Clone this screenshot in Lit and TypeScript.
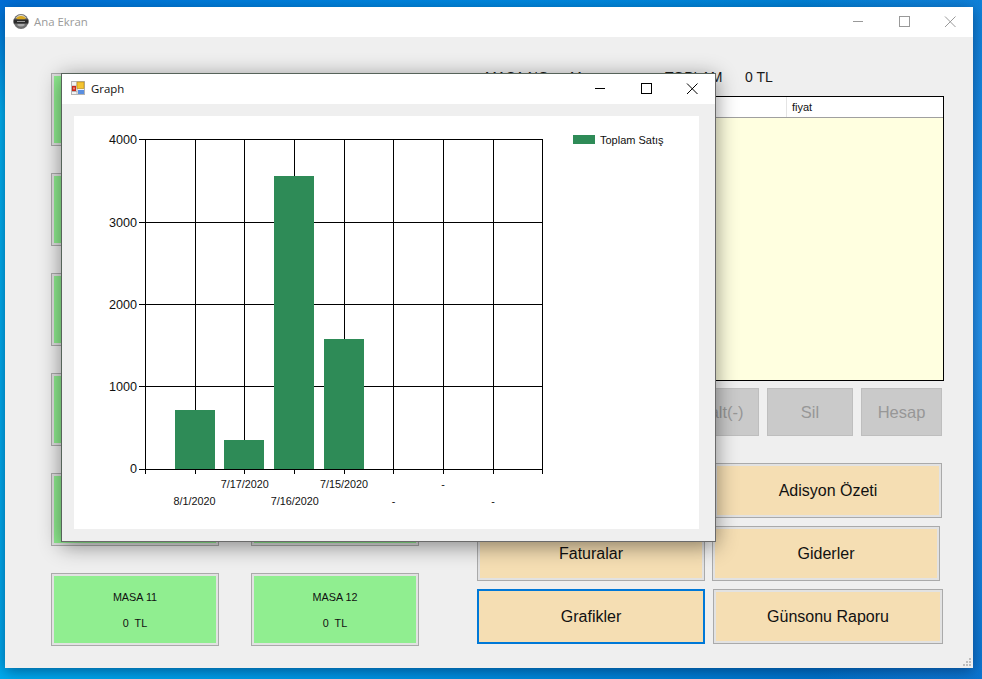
import { LitElement, html, css, svg } from "lit";
import { customElement } from "lit/decorators.js";

const V_LINES = [145, 195, 244, 294, 344, 393, 443, 493, 542];
const H_LINES: [number, string, number][] = [
  [139, "4000", 144],
  [222, "3000", 227],
  [304, "2000", 309],
  [386, "1000", 391],
  [469, "0", 473],
];
const BARS: [number, number][] = [[175, 410], [224, 440], [274, 176], [324, 339]];
const X_LABELS: [number, number, string][] = [
  [194.5, 505, "8/1/2020"],
  [244.7, 488, "7/17/2020"],
  [294.7, 505, "7/16/2020"],
  [344, 488, "7/15/2020"],
  [393.5, 505, "-"],
  [443, 488, "-"],
  [493, 505, "-"],
];

@customElement("app-root")
export class AppRoot extends LitElement {
  static styles = css`
    :host {
      display: block;
      width: 982px;
      height: 679px;
      font-family: "Liberation Sans", Arial, sans-serif;
      color: #111;
    }
    .desktop {
      position: relative;
      width: 982px;
      height: 679px;
      overflow: hidden;
      background:
        radial-gradient(ellipse 260px 500px at 1000px 320px, #2a98f0 0%, rgba(42, 152, 240, 0) 100%),
        linear-gradient(172deg, rgba(0, 110, 215, 1) 0%, rgba(0, 110, 215, 0) 14%),
        linear-gradient(105deg, #00b6f4 0%, #0098e6 45%, #0068c4 100%);
    }
    .main {
      position: absolute;
      left: 5px;
      top: 7px;
      width: 968px;
      height: 661px;
      background: #efefef;
      display: flex;
      flex-direction: column;
      box-shadow: 0 3px 14px rgba(0, 20, 60, 0.5);
    }
    .titlebar {
      height: 30px;
      flex: none;
      background: #fff;
      display: flex;
      align-items: center;
      font-family: "Open Sans", sans-serif;
      font-size: 11.4px;
    }
    .titlebar > svg:first-child {
      display: block;
      margin-bottom: 2px;
    }
    .title {
      padding-bottom: 2px;
    }
    .main .titlebar {
      color: #9a9a9a;
      padding-left: 8px;
    }
    .main .title {
      margin-left: 5px;
    }
    .controls {
      margin-left: auto;
      display: flex;
    }
    .controls svg {
      display: block;
      width: 46px;
      height: 30px;
    }
    .body {
      flex: 1;
      display: flex;
      gap: 58px;
      padding: 28px 0 0 46px;
      align-items: flex-start;
    }
    .tables {
      margin-top: 8px;
      display: grid;
      grid-template-columns: 168px 168px;
      column-gap: 32px;
      row-gap: 27px;
    }
    .masa {
      box-sizing: border-box;
      height: 73px;
      border: 1px solid #aaa;
      padding: 2px;
      background: #e2e2e2;
    }
    .masa-in {
      height: 100%;
      background: #90ee90;
      display: flex;
      flex-direction: column;
      align-items: center;
      padding-top: 15px;
      box-sizing: border-box;
      gap: 14px;
      font-size: 10.8px;
      line-height: 12px;
      white-space: pre;
    }
    .panel {
      width: 467px;
      display: flex;
      flex-direction: column;
    }
    .summary {
      height: 24px;
      margin-bottom: 7px;
      display: flex;
      align-items: center;
      font-size: 14px;
      white-space: pre;
      color: #1a1a1a;
    }
    .s1 { margin-left: 8px; width: 85px; }
    .s2 { width: 95px; }
    .s3 { width: 80px; }
    .list {
      box-sizing: border-box;
      height: 285px;
      border: 1px solid #000;
      background: #ffffe0;
    }
    .list-head {
      box-sizing: border-box;
      height: 21px;
      background: #fff;
      border-bottom: 1px solid #a0a0a0;
      display: grid;
      grid-template-columns: 308px 1fr;
    }
    .col {
      font-size: 11px;
      line-height: 20px;
      padding-left: 5px;
    }
    .col + .col {
      border-left: 1px solid #e4e4e4;
    }
    .grey-row {
      display: flex;
      gap: 8px;
      margin-top: 7px;
    }
    .grey {
      box-sizing: border-box;
      height: 48px;
      padding-top: 1px;
      background: #cacaca;
      border: 1px solid #bebebe;
      color: #979797;
      font-size: 16.5px;
      display: flex;
      align-items: center;
      justify-content: center;
    }
    .w190 { width: 190px; }
    .w84 { width: 84px; }
    .w86 { width: 86px; }
    .w81 { width: 81px; }
    .actions {
      display: flex;
      flex-direction: column;
      gap: 8px;
      margin-top: 27px;
    }
    .action-row {
      display: flex;
    }
    .action {
      box-sizing: border-box;
      width: 228px;
      height: 55px;
      border: 1px solid #aaa;
      padding: 2px;
      background: #e2e2e2;
      font-size: 16px;
    }
    .action > span {
      display: flex;
      width: 100%;
      height: 100%;
      align-items: center;
      justify-content: center;
      background: #f5deb3;
    }
    .action.focus {
      border: 2px solid #0078d7;
      padding: 0;
      background: #f5deb3;
    }
    .m9 { margin-left: 9px; }
    .m7 { margin-left: 7px; }
    .m8 { margin-left: 8px; }
    .wide { width: 230px; }
    .grip {
      position: absolute;
      right: 0;
      bottom: 0;
      display: block;
    }
    .graph {
      position: absolute;
      left: 61px;
      top: 73px;
      box-sizing: border-box;
      width: 655px;
      height: 469px;
      border: 1px solid #56635a;
      border-right-color: #6a6a6a;
      border-bottom-color: #6a6a6a;
      background: #efefef;
      display: flex;
      flex-direction: column;
      box-shadow: 0 4px 20px rgba(0, 0, 0, 0.45);
    }
    .graph .titlebar {
      color: #111;
      padding-left: 9px;
    }
    .graph .title {
      margin-left: 6px;
    }
    .chart-wrap {
      padding: 12px 16px 12px 12px;
    }
    .chart {
      display: block;
      width: 625px;
      height: 413px;
      background: #fff;
    }
    .chart text {
      font-family: "Liberation Sans", Arial, sans-serif;
      fill: #111;
    }
    .ax { font-size: 12.6px; }
    .tk { font-size: 10.8px; }
    .lg { font-size: 11px; }
    .dash {
      stroke-width: 1;
      shape-rendering: crispEdges;
    }
  `;

  private controls(color: string) {
    return html`<div class="controls">
      <svg viewBox="0 0 46 30" fill="none" stroke=${color} stroke-width="1">
        <path d="M18 14.5H28" />
      </svg>
      <svg viewBox="0 0 46 30" fill="none" stroke=${color} stroke-width="1">
        <rect x="18.5" y="9.5" width="10" height="10" />
      </svg>
      <svg viewBox="0 0 46 30" fill="none" stroke=${color} stroke-width="1">
        <path d="M18 9.5L28.5 20M28.5 9.5L18 20" />
      </svg>
    </div>`;
  }

  private logo() {
    return html`<svg width="16" height="16" viewBox="0 0 16 16">
      <circle cx="8" cy="8.5" r="7.5" fill="#6e6e6e" />
      <path d="M2.5 5 Q8 -1.5 13.5 5Z" fill="#d8d4c8" />
      <path d="M3 5.5 Q5 2.5 8 3 Q11 2.5 13 5.5 L11 6.5 H5Z" fill="#d9a820" />
      <rect x="0.6" y="6.5" width="14.8" height="4" fill="#2a2a2a" />
      <rect x="4" y="8" width="8" height="1" fill="#9a9a9a" />
      <path d="M4 12 Q8 15 12 12 L11 11 H5Z" fill="#a8a8a8" />
    </svg>`;
  }

  private graphIcon() {
    return html`<svg width="14" height="14" viewBox="0 0 14 14">
      <rect x="0.5" y="0.5" width="13" height="13" fill="#f2f2f2" stroke="#b4b4b4" />
      <path d="M0.5 5H6M6 0.5V13.5M0.5 10.5H6" stroke="#b4b4b4" fill="none" />
      <rect x="1" y="5" width="4" height="5" fill="#c8281c" />
      <rect x="2.2" y="6.4" width="1.6" height="2" fill="#f09a8a" />
      <rect x="6" y="1" width="7" height="6.5" fill="#f4c430" stroke="#b8860b" stroke-width="0.6" />
      <rect x="7" y="9" width="6" height="4" fill="#5a8fe0" />
    </svg>`;
  }

  private chart() {
    return svg`
      <g stroke="#000" class="dash">
        ${V_LINES.map((x) => svg`<line x1=${x + 0.5} y1="139" x2=${x + 0.5} y2="474" />`)}
        ${H_LINES.map(([y]) => svg`<line x1="139" y1=${y + 0.5} x2="543" y2=${y + 0.5} />`)}
      </g>
      ${BARS.map(([x, y]) => svg`<rect x=${x} y=${y} width="40" height=${469 - y} fill="#2e8b57" />`)}
      <g stroke="#000" class="dash">
        <line x1="139" y1="469.5" x2="543" y2="469.5" />
        ${V_LINES.map((x) => svg`<line x1=${x + 0.5} y1="469" x2=${x + 0.5} y2="474" />`)}
      </g>
      ${H_LINES.map(([, t, b]) => svg`<text class="ax" x="137" y=${b} text-anchor="end">${t}</text>`)}
      ${X_LABELS.map(([x, y, t]) => svg`<text class="tk" x=${x} y=${y} text-anchor="middle">${t}</text>`)}
      <rect x="573" y="135" width="22" height="9" fill="#2e8b57" />
      <text class="lg" x="600" y="144">Toplam Satış</text>
    `;
  }

  render() {
    const tables = Array.from({ length: 12 }, (_, i) => i + 1);
    return html`<div class="desktop">
      <div class="main">
        <div class="titlebar">
          ${this.logo()}<span class="title">Ana Ekran</span>
          ${this.controls("#999")}
        </div>
        <div class="body">
          <div class="tables">
            ${tables.map(
              (n) => html`<div class="masa">
                <div class="masa-in"><span>MASA ${n}</span><span>0  TL</span></div>
              </div>`
            )}
          </div>
          <div class="panel">
            <div class="summary">
              <span class="s1">MASA NO</span><span class="s2">M</span><span class="s3">TOPLAM</span><span>0 TL</span>
            </div>
            <div class="list">
              <div class="list-head">
                <div class="col"></div>
                <div class="col">fiyat</div>
              </div>
            </div>
            <div class="grey-row">
              <div class="grey w190"></div>
              <div class="grey w84">Azalt(-)</div>
              <div class="grey w86">Sil</div>
              <div class="grey w81">Hesap</div>
            </div>
            <div class="actions">
              <div class="action-row">
                <div class="action"><span></span></div>
                <div class="action m9"><span>Adisyon Özeti</span></div>
              </div>
              <div class="action-row">
                <div class="action"><span>Faturalar</span></div>
                <div class="action m7"><span>Giderler</span></div>
              </div>
              <div class="action-row">
                <div class="action focus"><span>Grafikler</span></div>
                <div class="action m8 wide"><span>Günsonu Raporu</span></div>
              </div>
            </div>
          </div>
        </div>
        <svg class="grip" width="12" height="12" viewBox="0 0 12 12" fill="#bdbdbd">
          <rect x="8" y="2" width="2" height="2" />
          <rect x="5" y="5" width="2" height="2" />
          <rect x="8" y="5" width="2" height="2" />
          <rect x="2" y="8" width="2" height="2" />
          <rect x="5" y="8" width="2" height="2" />
          <rect x="8" y="8" width="2" height="2" />
        </svg>
      </div>
      <div class="graph">
        <div class="titlebar">
          ${this.graphIcon()}<span class="title">Graph</span>
          ${this.controls("#000")}
        </div>
        <div class="chart-wrap">
          <svg class="chart" viewBox="74 116 625 413">${this.chart()}</svg>
        </div>
      </div>
    </div>`;
  }
}
